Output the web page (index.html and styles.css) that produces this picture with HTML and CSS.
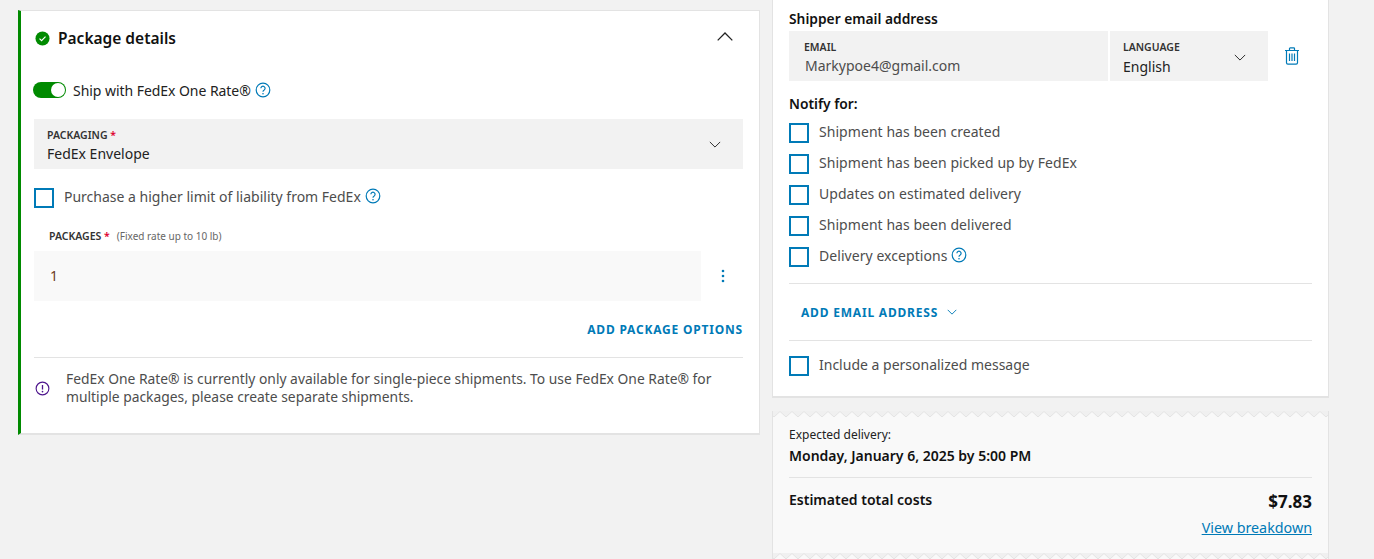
FILE: index.html
```html
<!DOCTYPE html>
<html lang="en">

<head>
    <meta charset="UTF-8">
    <title>FedEx shipment</title>
    <link rel="stylesheet" href="styles.css">
</head>

<body>
    <svg class="defs" width="0" height="0">
        <symbol id="help" viewBox="0 0 16 16">
            <circle cx="8" cy="8" r="6.8" fill="none" stroke="#007ab7" stroke-width="1.2" />
            <path d="M5.9 6.3a2.1 2.1 0 1 1 3.3 1.7c-.8.5-1.2.9-1.2 1.8" fill="none" stroke="#007ab7" stroke-width="1.2" />
            <circle cx="8" cy="11.8" r=".8" fill="#007ab7" />
        </symbol>
        <symbol id="chevron" viewBox="0 0 14 8">
            <path d="M1 1l6 6 6-6" fill="none" stroke="#222" stroke-width="1.1" />
        </symbol>
        <pattern id="zig" x="1" width="12" height="6" patternUnits="userSpaceOnUse">
            <path d="M0 0H12V6L6 .5 0 6Z" fill="#f0f0f0" />
            <path d="M0 6L6 .5 12 6" fill="none" stroke="#e3e3e3" />
        </pattern>
    </svg>

    <div class="page">
        <section class="card package">
            <div class="package-head">
                <svg class="status" viewBox="0 0 16 16">
                    <circle cx="8" cy="8" r="7.5" fill="#008a00" />
                    <path d="M4.8 8.2l2.2 2.2 4.2-4.4" fill="none" stroke="#fff" stroke-width="1.2" />
                </svg>
                <h2>Package details</h2>
                <svg class="collapse" viewBox="0 0 16 9">
                    <path d="M.7 8.4L8 1l7.3 7.4" fill="none" stroke="#222" stroke-width="1.3" />
                </svg>
            </div>

            <div class="toggle-row">
                <span class="toggle"><span class="knob"></span></span>
                <span class="toggle-text">Ship with FedEx One Rate®</span>
                <svg class="help"><use href="#help" /></svg>
            </div>

            <div class="field packaging">
                <div>
                    <div class="field-label">PACKAGING <span class="req">*</span></div>
                    <div class="field-value">FedEx Envelope</div>
                </div>
                <svg class="chevron"><use href="#chevron" /></svg>
            </div>

            <label class="check liability">
                <span class="box"></span>
                <span>Purchase a higher limit of liability from FedEx</span>
                <svg class="help"><use href="#help" /></svg>
            </label>

            <div class="packages-label">
                <span class="field-label">PACKAGES <span class="req">*</span></span>
                <span class="hint">(Fixed rate up to 10 lb)</span>
            </div>
            <div class="packages-row">
                <div class="packages-input">1</div>
                <svg class="kebab" viewBox="0 0 4 14">
                    <circle cx="2" cy="2" r="1.3" />
                    <circle cx="2" cy="7" r="1.3" />
                    <circle cx="2" cy="12" r="1.3" />
                </svg>
            </div>

            <div class="options"><a class="action">ADD PACKAGE OPTIONS</a></div>

            <div class="notice">
                <svg class="info" viewBox="0 0 16 16">
                    <circle cx="8" cy="8" r="6.8" fill="none" stroke="#4d148c" stroke-width="1.2" />
                    <path d="M8 4.3v4.8" stroke="#4d148c" stroke-width="1.4" />
                    <circle cx="8" cy="11.3" r=".9" fill="#4d148c" />
                </svg>
                <p>FedEx One Rate® is currently only available for single-piece shipments. To use FedEx One Rate® for multiple packages, please create separate shipments.</p>
            </div>
        </section>

        <div class="side">
            <section class="card email">
                <h3 class="first">Shipper email address</h3>
                <div class="email-row">
                    <div class="field email-field">
                        <div class="field-label">EMAIL</div>
                        <div class="field-value muted">Markypoe4@gmail.com</div>
                    </div>
                    <div class="field lang-field">
                        <div>
                            <div class="field-label">LANGUAGE</div>
                            <div class="field-value">English</div>
                        </div>
                        <svg class="chevron"><use href="#chevron" /></svg>
                    </div>
                    <svg class="trash" viewBox="0 0 16 18">
                        <path d="M1 3.500h14M5.500 3.300V1.600c0-.4.3-.7.7-.7h3.600c.4 0 .7.3.7.7v1.700M2.500 3.500v12.200c0 .8.6 1.400 1.400 1.400h8.200c.8 0 1.400-.6 1.400-1.400V3.500" fill="none" stroke="#007ab7" stroke-width="1.200" />
                        <path d="M5.500 6.500v7.500M8 6.500v7.500M10.500 6.500v7.500" stroke="#007ab7" stroke-width="1.200" />
                    </svg>
                </div>

                <h3 class="notify">Notify for:</h3>
                <ul class="checks">
                    <li class="check"><span class="box"></span><span>Shipment has been created</span></li>
                    <li class="check"><span class="box"></span><span>Shipment has been picked up by FedEx</span></li>
                    <li class="check"><span class="box"></span><span>Updates on estimated delivery</span></li>
                    <li class="check"><span class="box"></span><span>Shipment has been delivered</span></li>
                    <li class="check">
                        <span class="box"></span><span>Delivery exceptions</span>
                        <svg class="help"><use href="#help" /></svg>
                    </li>
                </ul>

                <div class="add-email">
                    <a class="action">ADD EMAIL ADDRESS</a>
                    <svg class="small" viewBox="0 0 14 8">
                        <path d="M1 1l6 6 6-6" fill="none" stroke="#007ab7" stroke-width="1.3" />
                    </svg>
                </div>

                <label class="check message">
                    <span class="box"></span><span>Include a personalized message</span>
                </label>
            </section>

            <section class="receipt">
                <svg class="zigzag top"><rect width="100%" height="6" fill="url(#zig)" /></svg>
                <div class="expected">Expected delivery:</div>
                <div class="date">Monday, January 6, 2025 by 5:00 PM</div>
                <div class="totals">
                    <div class="total-label">Estimated total costs</div>
                    <div class="total-right">
                        <div class="price">$7.83</div>
                        <a class="breakdown">View breakdown</a>
                    </div>
                </div>
                <svg class="zigzag bottom"><rect width="100%" height="6" fill="url(#zig)" /></svg>
            </section>
        </div>
    </div>
</body>

</html>
```

FILE: styles.css
```css
html, body {
    margin: 0;
    height: 100%;
    overflow: hidden;
}

body {
    font-family: 'Noto Sans', sans-serif;
    font-size: 14px;
    color: #333;
    background-color: #f2f2f2;
}

.defs {
    display: block;
}

h2, h3, p, ul {
    margin: 0;
    padding: 0;
}

.page {
    display: flex;
    align-items: flex-start;
    gap: 12px;
    padding-left: 18px;
}

.card {
    box-sizing: border-box;
    background-color: #fff;
    border: 1px solid #e3e3e3;
    border-bottom-width: 2px;
}

/* left column */
.package {
    width: 742px;
    height: 425px;
    margin-top: 10px;
    padding: 0 16px 0 13px;
    border-left: 3px solid #008a00;
}

.package-head {
    display: flex;
    align-items: center;
    height: 54px;
    padding-left: 1px;
}

.status {
    width: 15px;
    height: 15px;
    margin-right: 8px;
}

.package-head h2 {
    flex: 1;
    font-size: 15.500px;
    font-weight: 600;
    color: #111;
}

.collapse {
    width: 16px;
    height: 9px;
    margin: 0 10px 4px 0;
}

.toggle-row {
    display: flex;
    align-items: center;
    height: 20px;
    margin: 15px 0 19px -1px;
    color: #222;
}

.toggle-text {
    letter-spacing: -.05px;
}

.toggle {
    display: flex;
    justify-content: flex-end;
    align-items: center;
    box-sizing: border-box;
    width: 33px;
    height: 16px;
    margin-right: 7px;
    padding-right: 1px;
    border-radius: 8px;
    background-color: #008a00;
}

.knob {
    width: 14px;
    height: 14px;
    border-radius: 50%;
    background-color: #fff;
}

.help {
    width: 16px;
    height: 16px;
    margin-left: 4px;
}

.field {
    box-sizing: border-box;
    display: flex;
    justify-content: space-between;
    align-items: center;
    height: 50px;
    background-color: #f2f2f2;
}

.field-label {
    font-size: 10.500px;
    font-weight: 600;
    line-height: 14px;
    color: #333;
}

.field-value {
    font-size: 14px;
    line-height: 20px;
    color: #222;
}

.muted {
    margin-top: 2px;
    padding-left: 1px;
    color: #4d4d4d;
}

.req {
    color: #de002e;
}

.packaging {
    padding: 9px 22px 5px 13px;
}

.packaging .field-value {
    margin-top: 2px;
}

.packaging .chevron {
    margin-bottom: 3px;
}

.chevron {
    width: 12px;
    height: 7px;
}

.check {
    display: flex;
    align-items: center;
    height: 20px;
    list-style: none;
    color: #4d4d4d;
}

.box {
    box-sizing: border-box;
    flex: none;
    width: 20px;
    height: 20px;
    margin-right: 10px;
    border: 2px solid #007ab7;
}

.box + span {
    margin-top: -4px;
}

.check .help {
    margin-top: -5px;
}

.liability {
    margin-top: 19px;
}

.packages-label {
    display: flex;
    align-items: center;
    gap: 7px;
    height: 14px;
    margin: 21px 0 8px 15px;
}

.hint {
    font-size: 10px;
    color: #666;
}

.packages-row {
    display: flex;
    align-items: center;
}

.packages-input {
    width: 667px;
    height: 50px;
    box-sizing: border-box;
    padding-left: 16px;
    line-height: 50px;
    background-color: #f9f9f9;
    color: #6b3a25;
}

.kebab {
    width: 4px;
    height: 14px;
    margin-left: 20px;
    fill: #007ab7;
}

.options {
    margin-top: 19px;
    height: 18px;
    line-height: 18px;
    text-align: right;
}

.action {
    font-size: 12px;
    font-weight: 700;
    letter-spacing: .8px;
    color: #007ab7;
}

.notice {
    display: flex;
    align-items: center;
    gap: 16px;
    margin-top: 19px;
    padding: 12px 0 0 1px;
    border-top: 1px solid #e3e3e3;
}

.info {
    flex: none;
    width: 15px;
    height: 15px;
}

.notice p {
    font-size: 13.850px;
    line-height: 18px;
    color: #4d4d4d;
}

/* right column */
.side {
    width: 557px;
}

.email {
    height: 398px;
    padding: 0 16px;
    border-top: 0;
}

.email h3 {
    font-size: 13.800px;
    font-weight: 600;
    color: #111;
}

.first {
    height: 31px;
    padding-top: 10px;
    box-sizing: border-box;
    line-height: 18px;
}

.email-row {
    display: flex;
    align-items: center;
    gap: 2px;
}

.email-field {
    display: block;
    width: 319px;
    padding: 9px 15px;
}

.lang-field {
    width: 158px;
    padding: 9px 22px 4px 13px;
}

.lang-field .field-value {
    margin-top: 3px;
}

.lang-field .chevron {
    margin-bottom: 3px;
}

.trash {
    width: 16px;
    height: 18px;
    margin-left: 14px;
}

.notify {
    line-height: 18px;
    margin-top: 14px;
}

.checks {
    display: grid;
    gap: 11px;
    margin-top: 10px;
    padding-bottom: 16px;
    border-bottom: 1px solid #e3e3e3;
    letter-spacing: .055px;
}

.add-email {
    display: flex;
    align-items: center;
    gap: 9px;
    height: 56px;
    padding-left: 12px;
    border-bottom: 1px solid #e3e3e3;
}

.small {
    width: 10px;
    height: 6px;
}

.message {
    margin-top: 15px;
}

/* cost receipt */
.receipt {
    position: relative;
    box-sizing: border-box;
    height: 148px;
    margin-top: 13px;
    padding: 16px 16px 0;
    background-color: #f9f9f9;
    border-left: 1px solid #e3e3e3;
    border-right: 1px solid #e3e3e3;
    color: #111;
}

.zigzag {
    position: absolute;
    left: 0;
    width: 100%;
    height: 6px;
}

.top {
    top: 0;
}

.bottom {
    bottom: 0;
}

.expected {
    font-size: 12px;
    line-height: 16px;
    color: #222;
}

.date {
    margin-top: 3px;
    padding-bottom: 11px;
    font-size: 14px;
    font-weight: 600;
    line-height: 20px;
    border-bottom: 1px solid #e3e3e3;
}

.totals {
    display: flex;
    justify-content: space-between;
    align-items: flex-start;
    padding-top: 12px;
}

.total-label {
    font-size: 14px;
    font-weight: 600;
    line-height: 20px;
}

.total-right {
    text-align: right;
}

.price {
    font-size: 17px;
    font-weight: 700;
    line-height: 24px;
}

.breakdown {
    display: block;
    margin-top: 4px;
    font-size: 14.300px;
    line-height: 20px;
    color: #007ab7;
    text-decoration: underline;
}
```
